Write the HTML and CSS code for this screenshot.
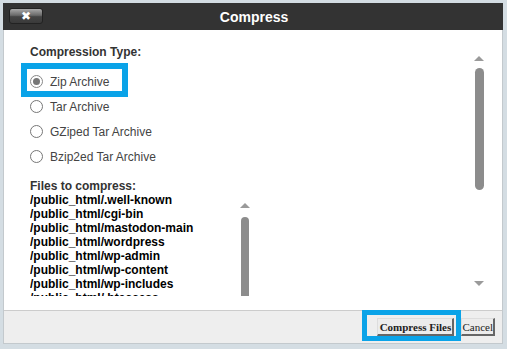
FILE: index.html
```html
<!DOCTYPE html>
<html lang="en">
<head>
    <meta charset="UTF-8">
    <meta name="viewport" content="width=device-width, initial-scale=1.0">
    <title>Compress</title>
    <link rel="stylesheet" href="styles.css">
</head>
<body>
    <div class="dialog">
        <div class="titlebar">
            <button class="close-button">&#x2716;</button>
            <h1>Compress</h1>
        </div>

        <div class="dialog-body">
            <div class="content">
                <p class="section-label">Compression Type:</p>
                <div class="radio-list">
                    <label class="radio-row marked"><span class="radio checked"></span>Zip Archive</label>
                    <label class="radio-row"><span class="radio"></span>Tar Archive</label>
                    <label class="radio-row"><span class="radio"></span>GZiped Tar Archive</label>
                    <label class="radio-row"><span class="radio"></span>Bzip2ed Tar Archive</label>
                </div>

                <p class="section-label files-label">Files to compress:</p>
                <div class="files-box">
                    <div class="files">
                        <div>/public_html/.well-known</div>
                        <div>/public_html/cgi-bin</div>
                        <div>/public_html/mastodon-main</div>
                        <div>/public_html/wordpress</div>
                        <div>/public_html/wp-admin</div>
                        <div>/public_html/wp-content</div>
                        <div>/public_html/wp-includes</div>
                        <div>/public_html/.htaccess</div>
                    </div>
                    <div class="mini-scroll">
                        <span class="arrow-up"></span>
                        <span class="mini-thumb"></span>
                    </div>
                </div>
            </div>

            <div class="vscroll">
                <span class="arrow-up"></span>
                <span class="thumb"></span>
                <span class="arrow-down"></span>
            </div>
        </div>

        <div class="footer">
            <span class="marked-button"><button class="button button-primary">Compress Files</button></span>
            <button class="button">Cancel</button>
        </div>
    </div>
</body>
</html>
```

FILE: styles.css
```css
*, *::before, *::after {
    margin: 0;
    padding: 0;
    box-sizing: border-box;
}
body {
    background-color: #d4dde3;
    padding: 3px 5px 0 3px;
    font-family: "Liberation Sans", Arial, sans-serif;
}
.dialog {
    width: 500px;
    height: 341px;
    border: 1px solid #c3c9cd;
    border-top: none;
    background-color: #eeeeee;
    display: flex;
    flex-direction: column;
}
.titlebar {
    height: 27px;
    background-color: #333333;
    display: flex;
    align-items: center;
    margin: 0 -1px;
}
.close-button {
    width: 34px;
    height: 16px;
    margin-left: 6px;
    margin-top: -2px;
    border: 1px solid #222;
    border-radius: 3px;
    background: linear-gradient(#a8a8a8, #6a6a6a 45%, #444 55%, #3a3a3a);
    color: #fff;
    font-size: 12px;
    font-weight: bold;
    line-height: 14px;
    font-family: "DejaVu Sans", sans-serif;
}
.titlebar h1 {
    flex: 1;
    text-align: center;
    margin-right: 41px;
    margin-left: 3px;
    font-size: 14px;
    font-weight: bold;
    color: #ffffff;
}
.dialog-body {
    height: 281px;
    background-color: #ffffff;
    border-bottom: 1px solid #cccccc;
    display: flex;
}
.content {
    flex: 1;
    padding: 15px 0 0 26px;
}
.section-label {
    font-size: 12px;
    line-height: 14px;
    font-weight: bold;
    color: #333;
}
.radio-list {
    margin-top: 10px;
}
.radio-row {
    display: flex;
    align-items: center;
    height: 25px;
    font-size: 12px;
    color: #444;
    position: relative;
}
.radio {
    width: 13px;
    height: 13px;
    border: 1px solid #777;
    border-radius: 50%;
    margin-right: 7px;
    display: flex;
    align-items: center;
    justify-content: center;
}
.radio.checked {
    border-color: #888;
}
.radio.checked::after {
    content: "";
    width: 7px;
    height: 7px;
    border-radius: 50%;
    background-color: #777;
}
.marked::before {
    content: "";
    position: absolute;
    left: -9px;
    top: -6px;
    width: 107px;
    height: 34px;
    border: 6px solid #0aa3e8;
}
.files-label {
    margin-top: 10px;
}
.files-box {
    width: 220px;
    height: 103px;
    display: flex;
    overflow: hidden;
}
.files {
    flex: 1;
    font-size: 12px;
    line-height: 14px;
    font-weight: bold;
    color: #000;
}
.mini-scroll {
    width: 10px;
    padding-top: 10px;
    display: flex;
    flex-direction: column;
    align-items: center;
}
.mini-thumb {
    width: 8px;
    flex: 1;
    margin-top: 9px;
    border-radius: 4px 4px 0 0;
    background-color: #8c8c8c;
}
.arrow-up, .arrow-down {
    width: 0;
    height: 0;
    border-left: 5px solid transparent;
    border-right: 5px solid transparent;
}
.arrow-up {
    border-bottom: 5px solid #9a9a9a;
}
.arrow-down {
    border-top: 5px solid #9a9a9a;
}
.vscroll {
    width: 10px;
    height: 230px;
    margin: 26px 18px 0 0;
    display: flex;
    flex-direction: column;
    align-items: center;
}
.vscroll .thumb {
    width: 9px;
    height: 122px;
    margin-top: 7px;
    border-radius: 5px;
    background-color: #8c8c8c;
}
.vscroll .arrow-down {
    margin-top: auto;
}
.footer {
    flex: 1;
    display: flex;
    justify-content: flex-end;
    align-items: center;
    gap: 7px;
    padding-right: 7px;
}
.button {
    height: 18px;
    padding: 0;
    white-space: nowrap;
    font-family: "Liberation Serif", "Times New Roman", serif;
    font-size: 11px;
    color: #222;
    background-color: #ececec;
    border-style: solid;
    border-width: 1px 2px 2px 1px;
    border-color: #dddddd #666666 #666666 #dddddd;
}
.button-primary {
    width: 77px;
    font-weight: bold;
}
.marked-button {
    position: relative;
    display: flex;
}
.marked-button::before {
    content: "";
    position: absolute;
    left: -15px;
    top: -8px;
    width: 99px;
    height: 31px;
    border: 5px solid #0aa3e8;
}
```
